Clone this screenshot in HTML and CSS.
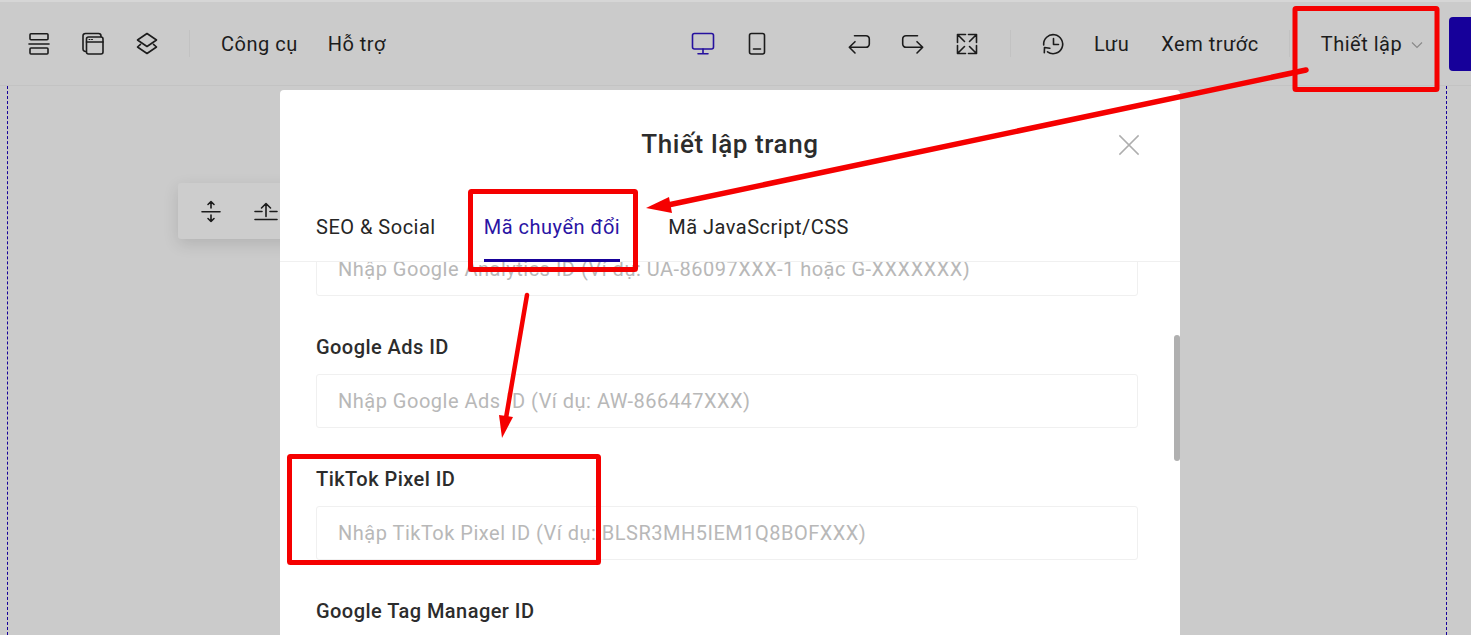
FILE: index.html
```html
<!DOCTYPE html>
<html lang="vi">
<head>
<meta charset="utf-8">
<title>Thiết lập trang</title>
<link rel="stylesheet" href="styles.css">
</head>
<body>
<div class="page">
  <header class="toolbar">
    <div class="tb-section tb-left">
      <svg class="ic" viewBox="0 0 24 24"><rect x="3" y="1.800" width="18" height="6" rx="1"/><path d="M2 12H22"/><rect x="3" y="16" width="18" height="6" rx="1"/></svg>
      <svg class="ic" viewBox="0 0 24 24"><path d="M20 4.500V4a2.500 2.500 0 0 0-2.500-2.500H4.500A2.500 2.500 0 0 0 2 4v13a2.500 2.500 0 0 0 3 2.500"/><rect x="5.500" y="5" width="16.500" height="17" rx="2"/><path d="M5.500 10H22"/><path class="thin" d="M8 7.500h1M10.500 7.500h1"/></svg>
      <svg class="ic" viewBox="0 0 24 24"><path d="M12 1.500 21.500 8 12 14.500 2.500 8Z"/><path d="M5.500 12.300 2.500 15 12 21.500 21.500 15 18.500 12.300"/></svg>
      <span class="sep sep-left"></span>
      <span class="tb-link">Công cụ</span>
      <span class="tb-link">Hỗ trợ</span>
    </div>
    <div class="tb-section tb-center">
      <svg class="ic ic-active" viewBox="0 0 24 24"><rect x="1.500" y="1.500" width="21" height="15.500" rx="2"/><path d="M12 17v4.500M7 21.800H17"/></svg>
      <svg class="ic" viewBox="0 0 24 24"><rect x="4.500" y="1.500" width="15" height="20.500" rx="2"/><path d="M8.500 17H15.500"/></svg>
      <svg class="ic ic-undo" viewBox="0 0 24 24"><path d="M7.500 3.700H19A3.300 3.300 0 0 1 22.300 7v5A3.300 3.300 0 0 1 19 15.300H2.300M8 9.700 2.300 15.300 8 21"/></svg>
      <svg class="ic" viewBox="0 0 24 24"><path d="M16.500 3.700H5A3.300 3.300 0 0 0 1.700 7v5A3.300 3.300 0 0 0 5 15.300H21.700M16 9.700 21.700 15.300 16 21"/></svg>
      <svg class="ic" viewBox="0 0 24 24"><path d="M2.500 10.500V2.500H10.500M2.500 2.500 9.500 9.500M13.500 2.500H21.500V10.500M21.500 2.500 14.500 9.500M2.500 13.500V21.500H10.500M2.500 21.500 9.500 14.500M13.500 21.500H21.500V13.500M21.500 21.500 14.500 14.500"/></svg>
    </div>
    <div class="tb-section tb-right">
      <span class="sep sep-right"></span>
      <svg class="ic ic-history" viewBox="0 0 24 24"><path d="M2.700 13A9.500 9.500 0 1 1 6.500 19.800"/><path d="M3.300 20.800 3.500 15.500 8.800 16.300"/><path d="M12.500 6.500V12.500H17.500"/></svg>
      <span class="tb-link tb-save">Lưu</span>
      <span class="tb-link tb-preview">Xem trước</span>
      <span class="sep sep-settings"></span>
      <span class="tb-link tb-settings">Thiết lập</span>
      <svg class="chevron" viewBox="0 0 12 8"><path d="M1 1.500 6 6.500 11 1.500"/></svg>
      <span class="publish"></span>
    </div>
  </header>

  <main class="canvas">
    <div class="float-bar">
      <svg class="ic" viewBox="0 0 24 24"><path d="M3 12.700H21M12 2.500V9M9 5.500 12 2.500 15 5.500M12 16V22.500M9 19.500 12 22.500 15 19.500"/></svg>
      <svg class="ic" viewBox="0 0 24 24"><path d="M1 20.500H23M12 4.500V17.500M7.500 9 12 4.500 16.500 9M1 12.500H8M16 12.500H23"/></svg>
    </div>
  </main>

  <section class="modal">
    <h2 class="modal-title">Thiết lập trang</h2>
    <svg class="modal-close" viewBox="0 0 24 24"><path d="M1.500 1.500 22.500 22.500M22.500 1.500 1.500 22.500"/></svg>
    <nav class="tabs">
      <span class="tab">SEO &amp; Social</span>
      <span class="tab tab-active">Mã chuyển đổi</span>
      <span class="tab">Mã JavaScript/CSS</span>
    </nav>
    <div class="modal-body">
      <div class="field field-scrolled">
        <label class="field-label">Google Analytics ID</label>
        <input class="field-input" placeholder="Nhập Google Analytics ID (Ví dụ: UA-86097XXX-1 hoặc G-XXXXXXX)">
      </div>
      <div class="field">
        <label class="field-label">Google Ads ID</label>
        <input class="field-input" placeholder="Nhập Google Ads ID (Ví dụ: AW-866447XXX)">
      </div>
      <div class="field">
        <label class="field-label">TikTok Pixel ID</label>
        <input class="field-input" placeholder="Nhập TikTok Pixel ID (Ví dụ: BLSR3MH5IEM1Q8BOFXXX)">
      </div>
      <div class="field">
        <label class="field-label">Google Tag Manager ID</label>
        <input class="field-input" placeholder="">
      </div>
    </div>
    <span class="scrollbar"></span>
  </section>

  <svg class="annotations" viewBox="0 0 1471 635">
    <rect class="anno-box" x="1295" y="8.500" width="142" height="81" rx="1"/>
    <rect class="anno-box" x="470.500" y="191.500" width="165" height="78" rx="1"/>
    <rect class="anno-box" x="289.500" y="456.500" width="309" height="106" rx="1"/>
    <path class="anno-line" d="M1306 70 668 205"/>
    <path class="anno-head" d="M646 208 669 197 672 213Z"/>
    <path class="anno-line anno-line-thin" d="M527 295 506 418"/>
    <path class="anno-head" d="M502 438 499 415 513 417Z"/>
  </svg>
</div>
</body>
</html>
```

FILE: styles.css
```css
* { box-sizing: border-box; }

html, body {
  margin: 0;
  height: 635px;
  overflow: hidden;
}

body {
  font-family: Roboto, "Liberation Sans", sans-serif;
  color: #1c1c1c;
  background: #cbcbcb;
}

.page {
  position: relative;
  width: 1471px;
  height: 635px;
  overflow: hidden;
  border-top: 2px solid #d6d6d6;
  display: flex;
  flex-direction: column;
}

/* top toolbar */
.toolbar {
  flex: none;
  height: 84px;
  display: flex;
  align-items: center;
  padding-left: 27px;
  border-bottom: 1px solid #c3c3c3;
}

.tb-section {
  display: flex;
  align-items: center;
  flex: none;
}

.tb-left { width: 664px; gap: 30px; }
.tb-center { width: 288px; gap: 30px; }
.tb-right { flex: 1; }

.ic {
  flex: none;
  width: 24px;
  height: 24px;
  fill: none;
  stroke: #1c1c1c;
  stroke-width: 1.6;
  stroke-linecap: round;
  stroke-linejoin: round;
}

.ic .thin { stroke-width: 1; }
.ic-active { stroke: #26119e; }
.ic-undo { margin-left: 48px; }

.tb-link {
  font-size: 20px;
  line-height: 28px;
  letter-spacing: .5px;
  white-space: nowrap;
}

.sep {
  flex: none;
  width: 1px;
  height: 27px;
  background: #c2c2c2;
}

.sep-left { margin-right: 1px; }
.sep-right { margin-left: 31px; }
.ic-history { margin-left: 30px; }
.tb-save { margin-left: 29px; }
.tb-preview { margin-left: 32px; }
.sep-settings { margin-left: 30px; }
.tb-settings { margin-left: 31px; }

.chevron {
  flex: none;
  width: 12px;
  height: 8px;
  margin-left: 9px;
  margin-top: 2px;
  fill: none;
  stroke: #8a8a8a;
  stroke-width: 1.2;
}

.publish {
  flex: none;
  width: 40px;
  height: 54px;
  margin-left: 26px;
  border-radius: 4px;
  background: #16009a;
}

/* page canvas behind the dialog */
.canvas {
  flex: 1;
  position: relative;
  width: 1440px;
  margin-left: 7px;
  border-left: 1px dashed #16009a;
  border-right: 1px dashed #16009a;
}

.float-bar {
  position: absolute;
  left: 170px;
  top: 97px;
  width: 200px;
  height: 56px;
  padding-left: 21px;
  display: flex;
  align-items: center;
  gap: 31px;
  border-radius: 3px;
  background: #cdcdcd;
  box-shadow: 0 5px 16px rgba(0, 0, 0, .12);
}

/* dialog */
.modal {
  position: absolute;
  left: 280px;
  top: 88px;
  width: 900px;
  height: 620px;
  background: #fff;
  border-radius: 4px 4px 0 0;
  display: flex;
  flex-direction: column;
}

.modal-title {
  flex: none;
  height: 102px;
  margin: 0;
  padding-top: 36px;
  text-align: center;
  font-size: 26px;
  line-height: 36px;
  font-weight: 500;
  letter-spacing: .6px;
  color: #2c2c2c;
}

.modal-close {
  position: absolute;
  left: 838px;
  top: 44px;
  width: 22px;
  height: 22px;
  fill: none;
  stroke: #aeaeae;
  stroke-width: 1.6;
}

.tabs {
  flex: none;
  height: 70px;
  display: flex;
  gap: 48px;
  padding-left: 36px;
  border-bottom: 1px solid #f0f0f0;
}

.tab {
  height: 70px;
  padding: 21px 0 0;
  font-size: 20px;
  line-height: 28px;
  letter-spacing: .5px;
  color: #262626;
  white-space: nowrap;
}

.tab-active {
  color: #2a14a4;
  border-bottom: 3px solid #16009a;
}

.modal-body {
  flex: 1;
  overflow: hidden;
  padding: 0 42px 0 36px;
}

.field { margin-bottom: 36px; }
.field-scrolled { margin-top: -62px; }

.field-label {
  display: block;
  height: 28px;
  margin-bottom: 14px;
  font-size: 20px;
  line-height: 30px;
  font-weight: 500;
  letter-spacing: .45px;
  color: #2c2c2c;
}

.field-input {
  display: block;
  width: 100%;
  height: 54px;
  padding: 0 21px;
  border: 1px solid #f0f0f0;
  border-radius: 3px;
  outline: 0;
  background: #fff;
  font-family: inherit;
  font-size: 20px;
  letter-spacing: .5px;
}

.field-input::placeholder {
  color: #b8b8b8;
  opacity: 1;
}

.scrollbar {
  position: absolute;
  left: 894px;
  top: 245px;
  width: 6px;
  height: 126px;
  border-radius: 3px;
  background: #b0b0b0;
}

/* red call-outs drawn over the screenshot */
.annotations {
  position: absolute;
  left: 0;
  top: -2px;
  width: 1471px;
  height: 635px;
  pointer-events: none;
}

.anno-box {
  fill: none;
  stroke: #f50000;
  stroke-width: 5;
}

.anno-line {
  fill: none;
  stroke: #f50000;
  stroke-width: 5.500;
  stroke-linecap: round;
}

.anno-line-thin { stroke-width: 4.500; }
.anno-head { fill: #f50000; }
```
